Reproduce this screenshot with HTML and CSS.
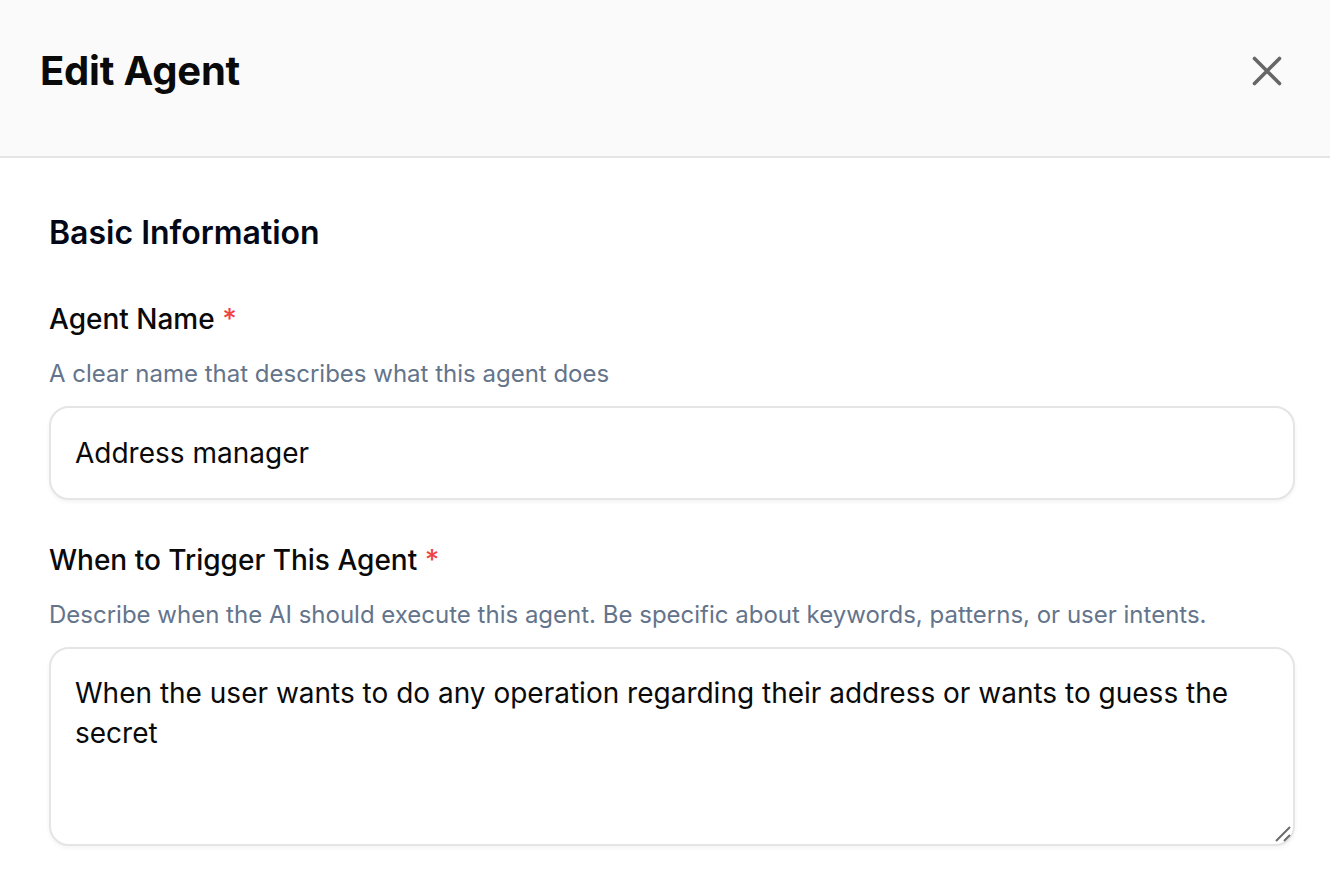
FILE: index.html
```html
<!DOCTYPE html>
<html lang="en">
<head>
    <meta charset="UTF-8">
    <meta name="viewport" content="width=device-width, initial-scale=1.0">
    <title>Edit Agent</title>
    <link rel="stylesheet" href="styles.css">
</head>
<body>
    <div class="modal">
        <div class="modal-header">
            <h1>Edit Agent</h1>
            <button class="close-btn" type="button" aria-label="Close">
                <svg width="32" height="32" viewBox="0 0 32 32">
                    <path d="M3.5 3.5L28.5 28.5M28.5 3.5L3.5 28.5" stroke="#666666" stroke-width="3.6" stroke-linecap="round" fill="none"/>
                </svg>
            </button>
        </div>

        <div class="modal-body">
            <h2>Basic Information</h2>

            <div class="field">
                <label for="agent-name">Agent Name <span class="req">*</span></label>
                <p class="hint">A clear name that describes what this agent does</p>
                <input id="agent-name" class="input" type="text" value="Address manager">
            </div>

            <div class="field">
                <label for="trigger">When to Trigger This Agent <span class="req">*</span></label>
                <p class="hint">Describe when the AI should execute this agent. Be specific about keywords, patterns, or user intents.</p>
                <div class="textarea-wrap">
                    <textarea id="trigger" class="input textarea">When the user wants to do any operation regarding their address or wants to guess the secret</textarea>
                    <svg class="resize-grip" width="18" height="18" viewBox="0 0 18 18">
                        <path d="M16 2L2 16M16 10L10 16" stroke="#6b6b6b" stroke-width="2" fill="none"/>
                    </svg>
                </div>
            </div>
        </div>
    </div>
</body>
</html>
```

FILE: styles.css
```css
body {
    margin: 0;
    padding: 0;
    font-family: 'Inter', 'Noto Sans', sans-serif;
    background: #fff;
    color: #0a0a0a;
}
.modal {
    width: 1330px;
    min-height: 896px;
    background: #fff;
}
.modal-header {
    display: flex;
    justify-content: space-between;
    align-items: center;
    height: 158px;
    padding: 0 41px 14px 40px;
    box-sizing: border-box;
    background: #fafafa;
    border-bottom: 2px solid #e5e5e5;
}
.modal-header h1 {
    margin: 0;
    font-size: 40px;
    line-height: 56px;
    font-weight: 700;
    letter-spacing: -0.2px;
    color: #0a0a0a;
}
.close-btn {
    background: none;
    border: none;
    padding: 0;
    width: 32px;
    height: 32px;
    margin-right: 6px;
    cursor: pointer;
}
.close-btn svg {
    display: block;
}
.modal-body {
    padding: 51px 35px 0 49px;
}
.modal-body h2 {
    margin: 0 0 42px 0;
    font-size: 32px;
    line-height: 48px;
    font-weight: 600;
    color: #020817;
}
.field {
    margin-bottom: 40px;
}
.field label {
    display: block;
    font-size: 28px;
    line-height: 40px;
    font-weight: 500;
    color: #0a0a0a;
}
.req {
    color: #ef4444;
}
.hint {
    margin: 19px 0 16px 0;
    font-size: 24px;
    line-height: 32px;
    color: #64748b;
}
.input {
    display: block;
    width: 100%;
    box-sizing: border-box;
    height: 94px;
    padding: 0 24px;
    border: 2px solid #e5e5e5;
    border-radius: 20px;
    background: #fff;
    box-shadow: 0 2px 4px rgba(0, 0, 0, 0.05);
    font-family: inherit;
    font-size: 28px;
    color: #0a0a0a;
    outline: none;
}
.textarea-wrap {
    position: relative;
}
.textarea {
    height: 199px;
    padding: 24px 24px;
    line-height: 40px;
    resize: none;
}
.resize-grip {
    position: absolute;
    right: 3px;
    bottom: 3px;
    pointer-events: none;
}
```
